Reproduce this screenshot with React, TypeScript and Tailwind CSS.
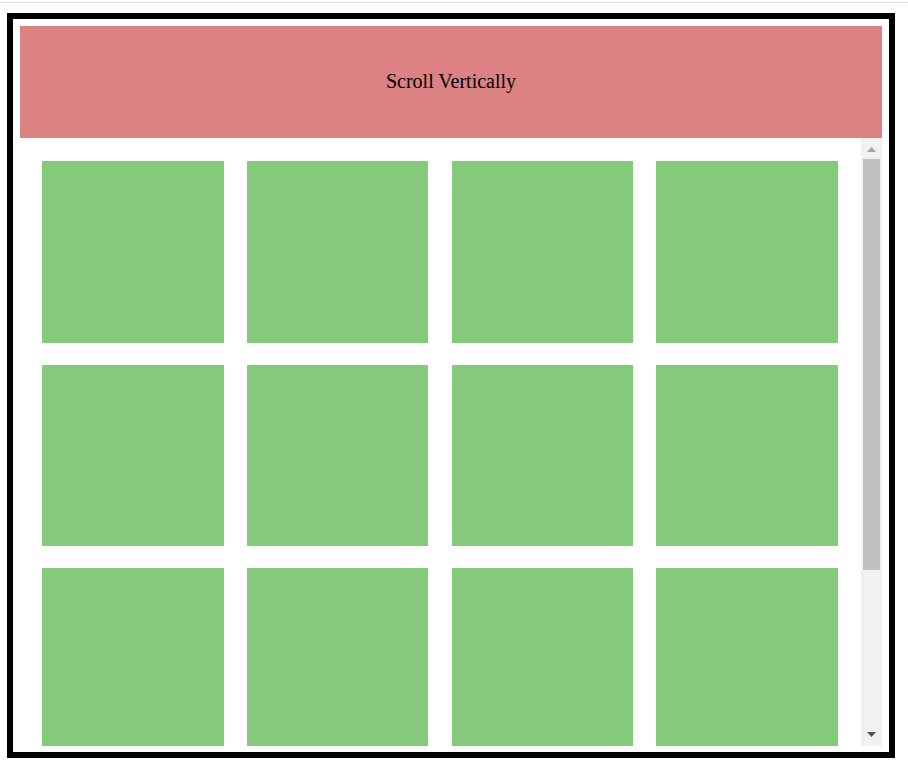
import React from "react";

export default function App() {
  const items = Array.from({ length: 16 }, (_, i) => i);
  return (
    <div className="w-[908px] h-[776px] bg-white relative overflow-hidden">
      <div className="h-[2px]" />
      <div className="h-px bg-[#dedede]" />
      <div className="ml-[7px] mt-[10px] w-[888px] h-[745px] border-[6px] border-black pt-[7px] px-[7px] pb-[6px] flex flex-col">
        <div
          className="h-[112px] shrink-0 bg-[#dc8282] flex items-center justify-center text-[20px] text-black pb-[2px]"
          style={{ fontFamily: '"Liberation Serif", "Times New Roman", serif' }}
        >
          Scroll Vertically
        </div>
        <div className="flex h-[608px]">
          <div className="flex-1 overflow-hidden pl-[22px] pt-[23px]">
            <div className="grid grid-cols-[repeat(4,181.5px)] auto-rows-[181.5px] gap-x-[23.3px] gap-y-[22px]">
              {items.map((i) => (
                <div key={i} className="bg-[#85ca7a]" />
              ))}
            </div>
          </div>
          <div className="w-[21px] shrink-0 bg-[#f1f1f1] relative">
            <svg className="absolute left-[6px] top-[9px]" width="9" height="5" viewBox="0 0 9 5">
              <polygon points="4.5,0 9,5 0,5" fill="#a3a3a3" />
            </svg>
            <div className="absolute left-[2px] top-[21px] w-[17px] h-[411px] bg-[#c1c1c1]" />
            <svg className="absolute left-[6px] top-[594px]" width="9" height="5" viewBox="0 0 9 5">
              <polygon points="0,0 9,0 4.5,5" fill="#505050" />
            </svg>
          </div>
        </div>
      </div>
    </div>
  );
}
